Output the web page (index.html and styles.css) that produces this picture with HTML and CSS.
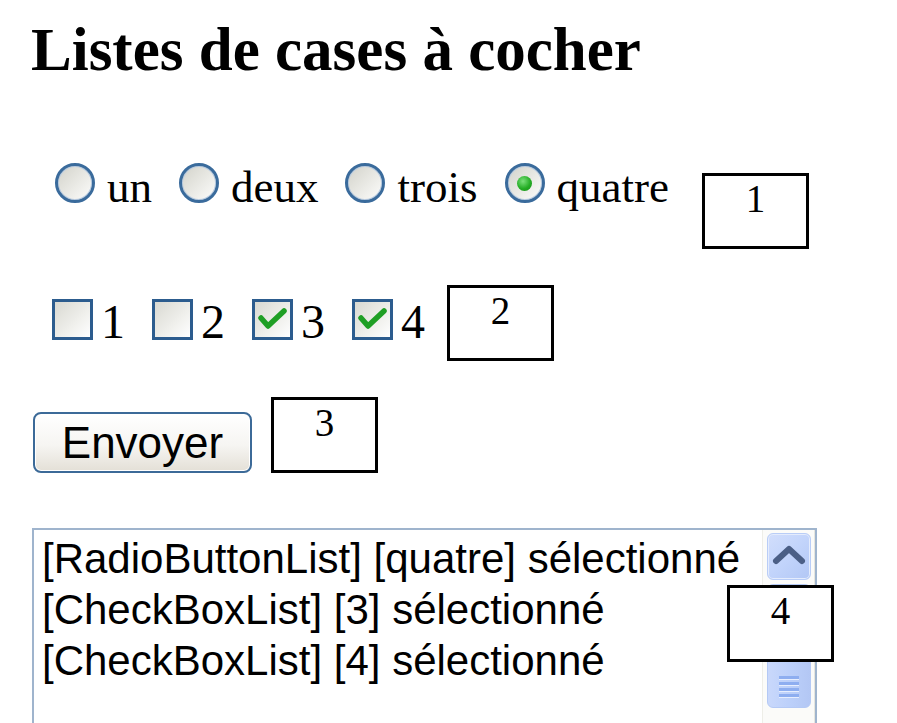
FILE: index.html
```html
<!DOCTYPE html>
<html lang="fr">
<head>
<meta charset="utf-8">
<title>Listes de cases à cocher</title>
<link rel="stylesheet" href="styles.css">
</head>
<body>
<main class="page">
  <h2 class="title">Listes de cases à cocher</h2>

  <div class="row radios">
    <label class="opt"><span class="radio"></span><span class="lbl">un</span></label>
    <label class="opt"><span class="radio"></span><span class="lbl">deux</span></label>
    <label class="opt"><span class="radio"></span><span class="lbl">trois</span></label>
    <label class="opt last"><span class="radio checked"></span><span class="lbl">quatre</span></label>
    <div class="note note-1">1</div>
  </div>

  <div class="row checks">
    <label class="opt"><span class="check"></span><span class="lbl">1</span></label>
    <label class="opt"><span class="check"></span><span class="lbl">2</span></label>
    <label class="opt"><span class="check"><svg class="tick" viewBox="0 0 35 35" width="35" height="35"><polyline points="6,16 13,24 29,9" fill="none" stroke="#1f9f24" stroke-width="5.5" stroke-linecap="round" stroke-linejoin="round"/></svg></span><span class="lbl">3</span></label>
    <label class="opt last"><span class="check"><svg class="tick" viewBox="0 0 35 35" width="35" height="35"><polyline points="6,16 13,24 29,9" fill="none" stroke="#1f9f24" stroke-width="5.5" stroke-linecap="round" stroke-linejoin="round"/></svg></span><span class="lbl">4</span></label>
    <div class="note note-2">2</div>
  </div>

  <div class="row submit">
    <button class="btn" type="button">Envoyer</button>
    <div class="note note-3">3</div>
  </div>

  <div class="listbox">
    <div class="list-text">
      <div>[RadioButtonList] [quatre] sélectionné</div>
      <div>[CheckBoxList] [3] sélectionné</div>
      <div>[CheckBoxList] [4] sélectionné</div>
    </div>
    <div class="scrollbar">
      <div class="sb-up">
        <svg viewBox="0 0 44 47" width="44" height="47"><polyline points="9,28 22,16 35,28" fill="none" stroke="#4b5f86" stroke-width="6" stroke-linecap="round" stroke-linejoin="round"/></svg>
      </div>
      <div class="sb-thumb">
        <div class="grip"><span></span><span></span><span></span><span></span></div>
      </div>
    </div>
    <div class="note note-4">4</div>
  </div>
</main>
</body>
</html>
```

FILE: styles.css
```css
html, body {
  margin: 0;
  overflow: hidden;
  background: #ffffff;
}

body {
  font-family: "Liberation Serif", "Times New Roman", serif;
  color: #000000;
}

.page {
  padding: 19px 0 0 32px;
}

.title {
  margin: 0 0 0 -1px;
  font-size: 61px;
  line-height: 61px;
  font-weight: bold;
}

.row {
  display: flex;
  align-items: flex-start;
}

.opt {
  display: flex;
  align-items: flex-start;
  flex: none;
}

.lbl {
  font-size: 45px;
  line-height: 45px;
  white-space: nowrap;
}

/* radio list */
.radios {
  margin: 83px 0 0 23px;
}

.radios .opt {
  gap: 12px;
  margin-right: 27px;
}

.radios .lbl {
  margin-top: 2px;
}

.radio {
  width: 40px;
  height: 40px;
  box-sizing: border-box;
  border-radius: 50%;
  border: 3px solid #3a6b9c;
  background: linear-gradient(135deg, #d2d2ca 0%, #e8e8e3 50%, #fdfdfc 100%);
  box-shadow: inset 0 0 0 1px #b9cbe0;
  display: flex;
  align-items: center;
  justify-content: center;
  flex: none;
}

.radio.checked::after {
  content: "";
  width: 15px;
  height: 15px;
  border-radius: 50%;
  background: radial-gradient(circle at 40% 35%, #7be07b 0%, #25ad25 55%, #168a16 100%);
}

/* check list */
.checks {
  margin: 36px 0 0 20px;
}

.checks .opt {
  gap: 8px;
  margin-top: 14px;
  margin-right: 27px;
}

.checks .lbl {
  font-size: 48px;
  line-height: 44px;
  margin-top: 1px;
}

.check {
  width: 41px;
  height: 41px;
  box-sizing: border-box;
  border: 3px solid #2c5c8e;
  background: linear-gradient(135deg, #d9d9d2 0%, #eeeeea 55%, #ffffff 100%);
  flex: none;
  display: block;
}

.tick {
  display: block;
}

.opt.last {
  margin-right: 0;
}

/* button */
.submit {
  margin: 36px 0 0 1px;
}

.btn {
  margin: 15px 0 0 0;
  width: 219px;
  height: 61px;
  box-sizing: border-box;
  padding: 0;
  border: 2px solid #3c6a98;
  border-radius: 8px;
  background: linear-gradient(#ffffff 0%, #f6f5f2 55%, #e4e0d7 100%);
  box-shadow: inset 0 0 0 1px #ffffff;
  font-family: "Liberation Sans", Arial, sans-serif;
  font-size: 44px;
  line-height: 1;
  color: #000000;
  flex: none;
}

/* annotation boxes */
.note {
  width: 107px;
  height: 76px;
  box-sizing: border-box;
  border: 3px solid #000000;
  background: #ffffff;
  text-align: center;
  font-family: "Liberation Serif", "Times New Roman", serif;
  font-size: 39px;
  line-height: 39px;
  padding-top: 3px;
  flex: none;
}

.note-1 {
  margin: 10px 0 0 33px;
}

.note-2 {
  margin-left: 22px;
}

.note-3 {
  margin-left: 19px;
}

.note-4 {
  position: absolute;
  left: 693px;
  top: 55px;
  height: 77px;
}

/* list box */
.listbox {
  position: relative;
  margin-top: 55px;
  width: 785px;
  height: 215px;
  box-sizing: border-box;
  border: 2px solid #9fb4cd;
  display: flex;
  background: #ffffff;
}

.list-text {
  flex: 1;
  padding: 3px 0 0 8px;
  font-family: "Liberation Sans", Arial, sans-serif;
  font-size: 42px;
  line-height: 51px;
  color: #000000;
  white-space: nowrap;
  overflow: hidden;
}

.scrollbar {
  width: 53px;
  flex: none;
  box-sizing: border-box;
  padding: 3px 3px 0 3px;
  background: #fbfbf9;
  border-left: 1px solid #eeeee8;
  border-right: 1px solid #e6e6df;
  display: flex;
  flex-direction: column;
  align-items: center;
  gap: 4px;
}

.sb-up {
  width: 44px;
  height: 47px;
  box-sizing: border-box;
  border-radius: 6px;
  border: 1px solid #b9cdf7;
  background: linear-gradient(135deg, #d2defc 0%, #c2d4fb 50%, #b2c7f5 100%);
  box-shadow: inset 0 0 0 1px #e4ecfd;
}

.sb-up svg {
  display: block;
  margin: -1px;
}

.sb-thumb {
  width: 44px;
  height: 124px;
  box-sizing: border-box;
  border-radius: 6px;
  border: 1px solid #b4c9f5;
  background: linear-gradient(90deg, #c9d8fb 0%, #bcd0fa 50%, #b3c7f4 100%);
  display: flex;
  flex-direction: column;
  justify-content: flex-end;
  align-items: center;
  padding-bottom: 10px;
}

.grip {
  display: flex;
  flex-direction: column;
  gap: 3px;
}

.grip span {
  display: block;
  width: 20px;
  height: 3px;
  background: #8eaef0;
  box-shadow: 0 1px 0 #e7eefe;
}
```
